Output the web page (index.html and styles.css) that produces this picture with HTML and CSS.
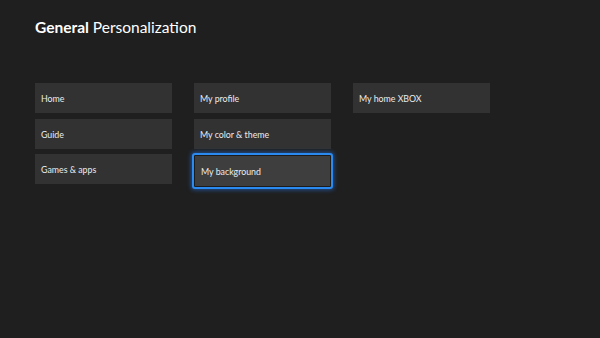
FILE: index.html
```html
<!DOCTYPE html>
<html lang="en">
<head>
    <meta charset="UTF-8">
    <meta name="viewport" content="width=device-width, initial-scale=1.0">
    <title>General Personalization</title>
    <link rel="stylesheet" href="styles.css">
</head>
<body>
    <div class="screen">
        <h1 class="title"><b>General</b> Personalization</h1>
        <div class="columns">
            <div class="column">
                <div class="tile">Home</div>
                <div class="tile">Guide</div>
                <div class="tile">Games &amp; apps</div>
            </div>
            <div class="column">
                <div class="tile">My profile</div>
                <div class="tile">My color &amp; theme</div>
                <div class="tile focused">My background</div>
            </div>
            <div class="column">
                <div class="tile">My home XBOX</div>
            </div>
        </div>
    </div>
</body>
</html>
```
FILE: styles.css
```css
html, body {
    margin: 0;
    padding: 0;
    background: #1f1f1f;
}
body {
    font-family: Lato, "Open Sans", sans-serif;
    color: #f2f2f2;
}
.screen {
    width: 600px;
    height: 338px;
    padding: 17px 0 0 35px;
    box-sizing: border-box;
}
.title {
    margin: 0;
    font-size: 15.5px;
    font-weight: 400;
    line-height: 20px;
    color: #ffffff;
}
.title b {
    font-weight: 700;
}
.columns {
    display: flex;
    gap: 22px;
    margin-top: 46px;
}
.column {
    display: flex;
    flex-direction: column;
    gap: 5.5px;
    width: 137px;
}
.tile {
    height: 30px;
    line-height: 31px;
    padding-left: 6px;
    background: #323232;
    font-size: 8.8px;
    color: #ececec;
}
/* selected tile: blue outline with a soft glow */
.tile.focused {
    margin: -1.5px -2px 0;
    height: 32px;
    line-height: 33px;
    padding-left: 7px;
    background: #3e3e3e;
    border: 2px solid #2a8af0;
    border-radius: 3px;
    box-shadow: inset 0 0 0 1px #1c1c1c, 0 0 4px 1px rgba(40, 130, 255, 0.5);
}
```
